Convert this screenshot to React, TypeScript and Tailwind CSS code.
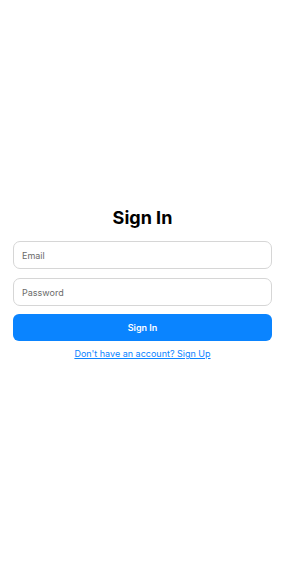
import React, { useState } from "react";

const App: React.FC = () => {
  const [email, setEmail] = useState("");
  const [password, setPassword] = useState("");

  return (
    <div
      className="min-h-screen bg-white flex flex-col justify-center px-[13px] pb-[6px]"
      style={{ fontFamily: "Inter, 'Noto Sans', sans-serif" }}
    >
      <h1 className="text-center text-[18px] font-bold text-black leading-[24px] mb-[11px]">
        Sign In
      </h1>
      <input
        type="email"
        value={email}
        onChange={(e) => setEmail(e.target.value)}
        placeholder="Email"
        className="h-[28px] w-full rounded-[7px] border border-[#d6d6d6] px-[8px] text-[9px] text-black placeholder:text-[#6b6b6b] outline-none"
      />
      <input
        type="password"
        value={password}
        onChange={(e) => setPassword(e.target.value)}
        placeholder="Password"
        className="mt-[9px] h-[28px] w-full rounded-[7px] border border-[#d6d6d6] px-[8px] text-[9px] text-black placeholder:text-[#6b6b6b] outline-none"
      />
      <button
        type="button"
        className="mt-[8px] h-[27px] w-full rounded-[6px] bg-[#0a84ff] text-[9px] font-semibold text-white"
      >
        Sign In
      </button>
      <a
        href="#"
        className="mt-[6px] self-center text-[9px] text-[#0a84ff] underline leading-[14px]"
      >
        Don't have an account? Sign Up
      </a>
    </div>
  );
};

export default App;
